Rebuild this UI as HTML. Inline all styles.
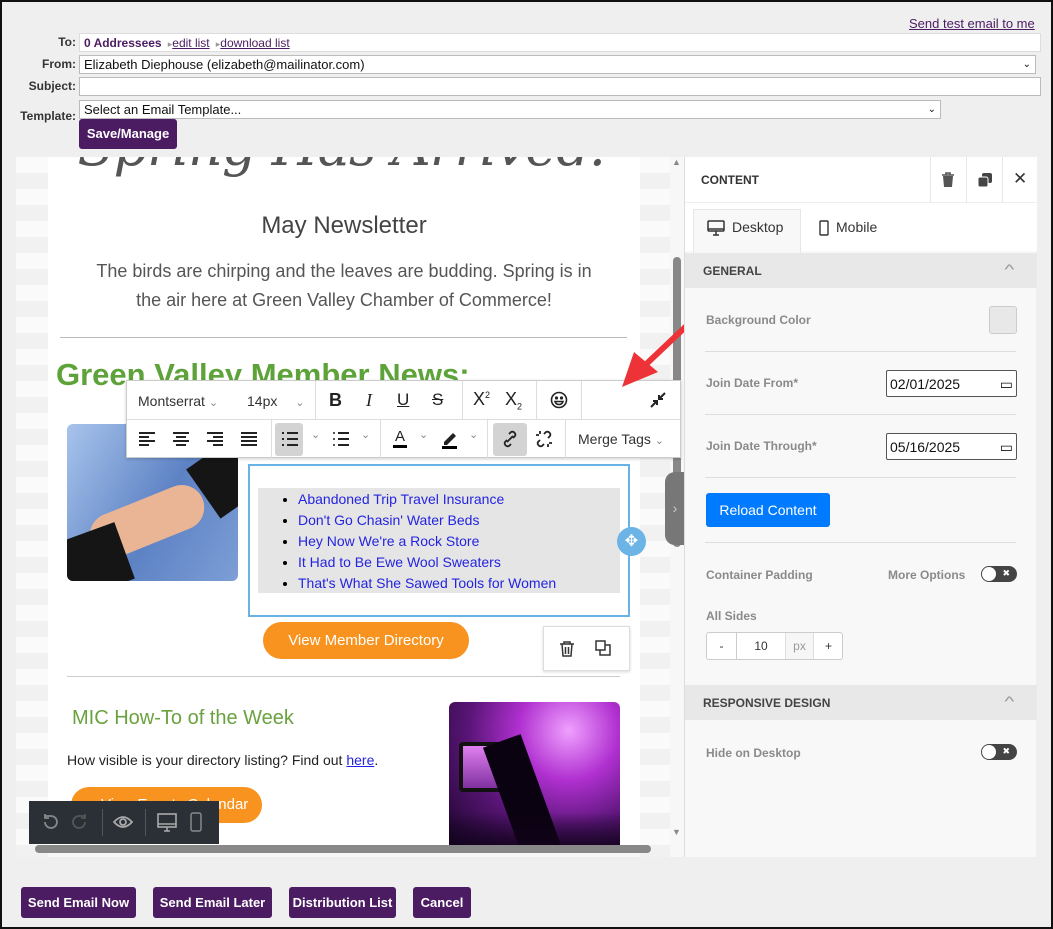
<!DOCTYPE html>
<html><head><meta charset="utf-8"><style>
*{box-sizing:border-box;margin:0;padding:0}
body{width:1053px;height:929px;background:#efefef;font-family:"Liberation Sans",sans-serif;position:relative;overflow:hidden}
.frame{position:absolute;left:0;top:0;width:1053px;height:929px;border:2px solid #111;pointer-events:none;z-index:50}
.a{position:absolute}
.lbl{position:absolute;font-size:12px;font-weight:bold;color:#333;text-align:right;width:74px}
.inp{position:absolute;background:#fff;border:1px solid #bbb;font-size:13px;padding:1px 4px;color:#111;height:19px;line-height:16px}
.pbtn{position:absolute;background:#4b1c62;color:#fff;font-size:13px;font-weight:bold;border-radius:3px;height:31px;line-height:31px;text-align:center}
.tb{position:absolute;background:#fff;border:1px solid #ccc;box-shadow:0 1px 3px rgba(0,0,0,.2)}
.rp{color:#8a8a8a;font-size:12px;font-weight:bold}
.sep{position:absolute;height:1px;background:#ddd;left:705px;width:311px}
.tog{position:absolute;width:36px;height:16px;border-radius:8px;background:#444}
.tog:before{content:"";position:absolute;left:1px;top:1px;width:14px;height:14px;border-radius:7px;background:#fff}
.tog:after{content:"✖";position:absolute;right:7px;top:2px;color:#fff;font-size:9px}
</style></head><body>
<div class="frame"></div>
<div class="a" style="left:909px;top:16px;font-size:13px;color:#4b1c62;text-decoration:underline">Send test email to me</div>
<div class="lbl" style="left:2px;top:35px">To:</div>
<div class="inp" style="left:79px;top:33px;width:962px;border-color:#ddd"><b style="color:#4b1c62;font-size:12px">0 Addressees</b> <span style="color:#999;font-size:9px">&nbsp;▸</span><span style="color:#4b1c62;text-decoration:underline;font-size:12px">edit list</span> <span style="color:#999;font-size:9px">&nbsp;▸</span><span style="color:#4b1c62;text-decoration:underline;font-size:12px">download list</span></div>
<div class="lbl" style="left:2px;top:57px">From:</div>
<div class="inp" style="left:79px;top:55px;width:957px">Elizabeth Diephouse (elizabeth@mailinator.com)<span style="float:right;font-size:10px">⌄</span></div>
<div class="lbl" style="left:2px;top:79px">Subject:</div>
<div class="inp" style="left:79px;top:77px;width:962px"></div>
<div class="lbl" style="left:2px;top:109px">Template:</div>
<div class="inp" style="left:79px;top:100px;width:862px">Select an Email Template...<span style="float:right;font-size:10px">⌄</span></div>
<div class="pbtn" style="left:79px;top:119px;width:98px;height:30px;line-height:30px">Save/Manage</div>

<div class="a" style="left:16px;top:157px;width:668px;height:700px;background:#f7f7f7;overflow:hidden">
 <div class="a" style="left:0;top:0;width:32px;height:700px;background:repeating-linear-gradient(#fafafa 0 16px,#f1f1f1 16px 32px)"></div>
 <div class="a" style="left:32px;top:0;width:592px;height:688px;background:#fff;overflow:hidden">
  <div class="a" style="left:0;width:592px;text-align:center;top:-42px;font-family:'DejaVu Serif',serif;font-style:italic;font-size:54px;color:#555;white-space:nowrap;letter-spacing:-1px">Spring Has Arrived!</div>
  <div class="a" style="left:0;width:592px;top:55px;text-align:center;font-size:24px;color:#444">May Newsletter</div>
  <div class="a" style="left:36px;width:520px;top:100px;text-align:center;font-size:18px;line-height:29px;color:#555">The birds are chirping and the leaves are budding. Spring is in the air here at Green Valley Chamber of Commerce!</div>
  <div class="a" style="left:12px;top:180px;width:567px;height:1px;background:#bbb"></div>
  <div class="a" style="left:8px;top:200px;font-size:31px;font-weight:bold;color:#5ea33a;white-space:nowrap">Green Valley Member News:</div>
  <div class="a" style="left:19px;top:267px;width:171px;height:157px;border-radius:6px;overflow:hidden;background:linear-gradient(120deg,#a8c4ec,#5d82c4 55%,#7d9ed6)">
   <div class="a" style="left:20px;top:75px;width:120px;height:45px;background:#e9b594;border-radius:25px;transform:rotate(-22deg)"></div>
   <div class="a" style="left:-20px;top:110px;width:80px;height:60px;background:#151515;transform:rotate(-20deg)"></div>
   <div class="a" style="left:130px;top:20px;width:70px;height:60px;background:#151515;transform:rotate(-35deg)"></div>
  </div>
  <div class="a" style="left:200px;top:307px;width:382px;height:153px;border:2px solid #69b2e6"></div>
  <div class="a" style="left:210px;top:331px;width:362px;height:105px;background:#e5e5e5;padding:1px 0 0 40px;font-size:14px;line-height:21px">
   <ul style="list-style:disc;color:#000"><li><span style="color:#2424e0">Abandoned Trip Travel Insurance</span></li><li><span style="color:#2424e0">Don't Go Chasin' Water Beds</span></li><li><span style="color:#2424e0">Hey Now We're a Rock Store</span></li><li><span style="color:#2424e0">It Had to Be Ewe Wool Sweaters</span></li><li><span style="color:#2424e0">That's What She Sawed Tools for Women</span></li></ul>
  </div>
  <div class="a" style="left:215px;top:465px;width:206px;height:37px;border-radius:19px;background:#f7931e;color:#fff;text-align:center;line-height:37px;font-size:15px">View Member Directory</div>
  <div class="a" style="left:495px;top:469px;width:87px;height:45px;background:#fff;border:1px solid #ddd;box-shadow:0 1px 3px rgba(0,0,0,.15)">
   <svg class="a" style="left:14px;top:13px" width="18" height="18" viewBox="0 0 18 18" fill="none" stroke="#333" stroke-width="1.5"><path d="M2 4h14M6 4V2h6v2M4 4l1 12h8l1-12M7.5 7v7M10.5 7v7"/></svg>
   <svg class="a" style="left:50px;top:12px" width="18" height="18" viewBox="0 0 18 18" fill="none" stroke="#333" stroke-width="1.5"><rect x="2" y="2" width="9" height="9"/><path d="M11 6h5v10H6v-5"/></svg>
  </div>
  <div class="a" style="left:19px;top:519px;width:553px;height:1px;background:#ccc"></div>
  <div class="a" style="left:24px;top:550px;font-size:20px;color:#6aa23f">MIC How-To of the Week</div>
  <div class="a" style="left:19px;top:595px;font-size:14px;color:#222">How visible is your directory listing? Find out <span style="color:#2424e0;text-decoration:underline">here</span>.</div>
  <div class="a" style="left:23px;top:630px;width:191px;height:36px;border-radius:18px;background:#f7931e;color:#fff;line-height:36px;font-size:15px;padding-left:30px">View Events Calendar</div>
  <div class="a" style="left:401px;top:545px;width:171px;height:143px;border-radius:6px 6px 0 0;overflow:hidden;background:radial-gradient(circle at 70% 20%,#f0a0ff,#b030d0 30%,#5a1578 60%,#1a0528)">
   <div class="a" style="left:10px;top:40px;width:60px;height:50px;background:linear-gradient(#e080f0,#8030a0);border:4px solid #111;border-radius:4px"></div>
   <div class="a" style="left:55px;top:35px;width:40px;height:130px;background:#0a0210;transform:rotate(-20deg)"></div>
   <div class="a" style="left:0;top:110px;width:171px;height:40px;background:linear-gradient(transparent,#12031c)"></div>
  </div>
 </div>
 <div class="a" style="left:624px;top:0;width:30px;height:700px;background:repeating-linear-gradient(#fafafa 0 16px,#f1f1f1 16px 32px)"></div>
 <div class="a" style="left:601px;top:370px;width:29px;height:29px;border-radius:15px;background:#6cb3e6;color:#fff;text-align:center;line-height:29px;font-size:16px">✥</div>
 <div class="a" style="left:657px;top:100px;width:8px;height:290px;background:#888;border-radius:4px"></div>
 <div class="a" style="left:656px;top:0;font-size:9px;color:#888">▲</div>
 <div class="a" style="left:656px;top:670px;font-size:9px;color:#888">▼</div>
 <div class="a" style="left:649px;top:315px;width:20px;height:73px;background:#777;border-radius:10px 0 0 10px;color:#ccc;font-size:14px;line-height:73px;text-align:center">›</div>
 <div class="a" style="left:19px;top:688px;width:616px;height:8px;background:#888;border-radius:4px"></div>
</div>

<div class="tb" style="left:126px;top:380px;width:555px;height:78px">
 <div class="a" style="left:0;top:38px;width:553px;height:1px;background:#ddd"></div>
 <div class="a" style="left:11px;top:12px;font-size:14px;color:#333">Montserrat <span style="color:#888;font-size:11px">⌄</span></div>
 <div class="a" style="left:120px;top:12px;font-size:14px;color:#333">14px <span style="color:#888;font-size:11px;margin-left:14px">⌄</span></div>
 <div class="a" style="left:188px;top:0;width:1px;height:38px;background:#ddd"></div>
 <div class="a" style="left:202px;top:9px;font-size:18px;font-weight:bold;color:#222">B</div>
 <div class="a" style="left:239px;top:9px;font-size:18px;font-style:italic;font-family:'Liberation Serif',serif;color:#222">I</div>
 <div class="a" style="left:270px;top:9px;font-size:17px;text-decoration:underline;color:#222">U</div>
 <div class="a" style="left:305px;top:9px;font-size:17px;text-decoration:line-through;color:#222">S</div>
 <div class="a" style="left:335px;top:0;width:1px;height:38px;background:#ddd"></div>
 <div class="a" style="left:346px;top:8px;font-size:18px;color:#222">X<sup style="font-size:9px">2</sup></div>
 <div class="a" style="left:378px;top:8px;font-size:18px;color:#222">X<sub style="font-size:9px">2</sub></div>
 <div class="a" style="left:409px;top:0;width:1px;height:38px;background:#ddd"></div>
 <svg class="a" style="left:423px;top:10px" width="18" height="18" viewBox="0 0 18 18" fill="none" stroke="#222" stroke-width="1.6"><circle cx="9" cy="9" r="7.5"/><circle cx="6.5" cy="7" r=".8" fill="#222"/><circle cx="11.5" cy="7" r=".8" fill="#222"/><path d="M5 10.5h8q-1 3-4 3t-4-3z"/></svg>
 <div class="a" style="left:454px;top:0;width:1px;height:38px;background:#ddd"></div>
 <svg class="a" style="left:523px;top:11px" width="16" height="16" viewBox="0 0 16 16" stroke="#222" stroke-width="2" fill="none"><path d="M15 1L9 7M9 3v4h4M1 15l6-6M3 9h4v4"/></svg>
 <svg class="a" style="left:12px;top:51px" width="16" height="14" viewBox="0 0 16 14" stroke="#222" stroke-width="2"><path d="M0 1h16M0 5h10M0 9h16M0 13h10"/></svg>
 <svg class="a" style="left:46px;top:51px" width="16" height="14" viewBox="0 0 16 14" stroke="#222" stroke-width="2"><path d="M0 1h16M3 5h10M0 9h16M3 13h10"/></svg>
 <svg class="a" style="left:80px;top:51px" width="16" height="14" viewBox="0 0 16 14" stroke="#222" stroke-width="2"><path d="M0 1h16M6 5h10M0 9h16M6 13h10"/></svg>
 <svg class="a" style="left:114px;top:51px" width="16" height="14" viewBox="0 0 16 14" stroke="#222" stroke-width="2"><path d="M0 1h16M0 5h16M0 9h16M0 13h16"/></svg>
 <div class="a" style="left:144px;top:39px;width:1px;height:38px;background:#ddd"></div>
 <div class="a" style="left:148px;top:42px;width:28px;height:33px;background:#d3d3d3;border-radius:3px"></div>
 <svg class="a" style="left:155px;top:51px" width="16" height="14" viewBox="0 0 16 14" stroke="#222" stroke-width="2"><path d="M0 1h2M0 7h2M0 13h2M5 1h11M5 7h11M5 13h11"/></svg>
 <div class="a" style="left:184px;top:47px;font-size:11px;color:#888">⌄</div>
 <svg class="a" style="left:206px;top:51px" width="16" height="14" viewBox="0 0 16 14" stroke="#222" stroke-width="2"><path d="M5 1h11M5 7h11M5 13h11"/><path d="M0 1h2M0 7h2M0 13h2" stroke-width="1.5"/></svg>
 <div class="a" style="left:234px;top:47px;font-size:11px;color:#888">⌄</div>
 <div class="a" style="left:253px;top:39px;width:1px;height:38px;background:#ddd"></div>
 <div class="a" style="left:266px;top:48px;font-size:15px;color:#222;border-bottom:3px solid #000;line-height:16px;padding:0 2px">A</div>
 <div class="a" style="left:292px;top:47px;font-size:11px;color:#888">⌄</div>
 <svg class="a" style="left:313px;top:48px" width="20" height="20" viewBox="0 0 20 20"><path d="M4 13l9-9 3 3-9 9H4z" fill="#222"/><rect x="2" y="17" width="15" height="3" fill="#000"/></svg>
 <div class="a" style="left:342px;top:47px;font-size:11px;color:#888">⌄</div>
 <div class="a" style="left:360px;top:39px;width:1px;height:38px;background:#ddd"></div>
 <div class="a" style="left:366px;top:42px;width:34px;height:33px;background:#d3d3d3;border-radius:3px"></div>
 <svg class="a" style="left:374px;top:49px" width="18" height="18" viewBox="0 0 18 18" fill="none" stroke="#222" stroke-width="1.8"><path d="M8 4l2-2a3 3 0 014 4l-2 2M10 14l-2 2a3 3 0 01-4-4l2-2M6 12l6-6"/></svg>
 <svg class="a" style="left:408px;top:49px" width="18" height="18" viewBox="0 0 18 18" fill="none" stroke="#222" stroke-width="1.8"><path d="M9 4l2-2a3 3 0 014 4l-2 2M9 14l-2 2a3 3 0 01-4-4l2-2M1 5h3M5 1v3M17 13h-3M13 17v-3"/></svg>
 <div class="a" style="left:438px;top:39px;width:1px;height:38px;background:#ddd"></div>
 <div class="a" style="left:451px;top:50px;font-size:14px;color:#333">Merge Tags <span style="color:#888;font-size:11px">⌄</span></div>
</div>

<svg class="a" style="left:600px;top:280px" width="130" height="120"><line x1="117" y1="17" x2="40" y2="90" stroke="#ee3338" stroke-width="6" stroke-linecap="round"/><path d="M22 107L34 72L58 92Z" fill="#ee3338"/></svg>

<div class="a" style="left:29px;top:801px;width:190px;height:43px;background:#2b2f36">
 <svg class="a" style="left:12px;top:12px" width="18" height="18" viewBox="0 0 18 18" fill="none" stroke="#888" stroke-width="1.8"><path d="M4 9a6 6 0 106-6H4M4 1v4h4" /></svg>
 <svg class="a" style="left:42px;top:12px" width="18" height="18" viewBox="0 0 18 18" fill="none" stroke="#555" stroke-width="1.8"><path d="M14 9a6 6 0 11-6-6h6M14 1v4h-4"/></svg>
 <div class="a" style="left:73px;top:8px;width:1px;height:27px;background:#555"></div>
 <svg class="a" style="left:84px;top:12px" width="20" height="18" viewBox="0 0 20 18" fill="none" stroke="#aaa" stroke-width="1.8"><path d="M1 9q9-10 18 0q-9 10-18 0z"/><circle cx="10" cy="9" r="3"/></svg>
 <div class="a" style="left:116px;top:8px;width:1px;height:27px;background:#555"></div>
 <svg class="a" style="left:128px;top:12px" width="20" height="20" viewBox="0 0 20 20" fill="none" stroke="#aaa" stroke-width="1.6"><rect x="1" y="1" width="18" height="13"/><path d="M1 11h18M7 18h6M10 14v4"/></svg>
 <svg class="a" style="left:161px;top:11px" width="12" height="20" viewBox="0 0 12 20" fill="none" stroke="#888" stroke-width="1.5"><rect x="1" y="1" width="10" height="18" rx="2"/></svg>
</div>

<div class="a" style="left:684px;top:157px;width:352px;height:700px;background:#f8f8f8;border-left:1px solid #ddd">
 <div class="a" style="left:0;top:0;width:352px;height:46px;background:#fff;border-bottom:1px solid #eee"></div>
 <div class="a" style="left:16px;top:16px;font-size:12px;font-weight:bold;color:#333">CONTENT</div>
 <div class="a" style="left:245px;top:0;width:1px;height:46px;background:#e6e6e6"></div>
 <div class="a" style="left:281px;top:0;width:1px;height:46px;background:#e6e6e6"></div>
 <div class="a" style="left:317px;top:0;width:1px;height:46px;background:#e6e6e6"></div>
 <svg class="a" style="left:256px;top:15px" width="14" height="16" viewBox="0 0 14 16"><path d="M1 3h12M5 3V1h4v2" stroke="#555" stroke-width="1.6" fill="none"/><path d="M2 4h10l-1 11H3z" fill="#555"/></svg>
 <svg class="a" style="left:292px;top:15px" width="16" height="16" viewBox="0 0 16 16"><rect x="5" y="1" width="10" height="10" rx="2" fill="#444"/><rect x="1" y="5" width="10" height="10" rx="2" fill="#444" stroke="#fff"/></svg>
 <div class="a" style="left:328px;top:12px;font-size:17px;color:#333">✕</div>
 <div class="a" style="left:0;top:46px;width:352px;height:48px;background:#fff"></div>
 <div class="a" style="left:8px;top:52px;width:108px;height:44px;background:#f8f8f8;border:1px solid #e6e6e6;border-bottom:none"></div>
 <svg class="a" style="left:22px;top:63px" width="18" height="16" viewBox="0 0 18 16" fill="none" stroke="#333" stroke-width="1.5"><rect x="1" y="1" width="16" height="10" rx="1"/><path d="M1 9h16M6 15h6M9 11v4"/></svg>
 <div class="a" style="left:47px;top:62px;font-size:14px;color:#333">Desktop</div>
 <svg class="a" style="left:134px;top:63px" width="10" height="16" viewBox="0 0 10 16" fill="none" stroke="#333" stroke-width="1.4"><rect x="1" y="1" width="8" height="14" rx="1"/></svg>
 <div class="a" style="left:151px;top:62px;font-size:14px;color:#333">Mobile</div>
 <div class="a" style="left:0;top:96px;width:352px;height:35px;background:#e8e8e8"></div>
 <div class="a" style="left:18px;top:107px;font-size:12px;font-weight:bold;color:#444">GENERAL</div>
 <div class="a" style="left:321px;top:104px;font-size:14px;color:#999;transform:scaleX(1.5)">^</div>
 <div class="a rp" style="left:21px;top:156px">Background Color</div>
 <div class="a" style="left:304px;top:149px;width:28px;height:28px;background:#e8e8e8;border:1px solid #ccc;border-radius:3px"></div>
 <div class="a rp" style="left:21px;top:219px">Join Date From*</div>
 <div class="a rp" style="left:21px;top:282px">Join Date Through*</div>
 <div class="a" style="left:201px;top:213px;width:131px;height:27px;background:#fff;border:1px solid #555;border-radius:2px;font-size:14px;padding:5px 3px;color:#111">02/01/2025<span style="float:right">▭</span></div>
 <div class="a" style="left:201px;top:276px;width:131px;height:27px;background:#fff;border:1px solid #555;border-radius:2px;font-size:14px;padding:5px 3px;color:#111">05/16/2025<span style="float:right">▭</span></div>
 <div class="a" style="left:21px;top:336px;width:124px;height:34px;background:#007bff;border-radius:3px;color:#fff;font-size:14px;line-height:34px;text-align:center">Reload Content</div>
 <div class="a rp" style="left:21px;top:411px">Container Padding</div>
 <div class="a rp" style="left:203px;top:411px">More Options</div>
 <div class="tog" style="left:296px;top:409px"></div>
 <div class="a rp" style="left:21px;top:452px">All Sides</div>
 <div class="a" style="left:21px;top:475px;width:137px;height:28px;background:#fff;border:1px solid #ccc;border-radius:3px;font-size:12px;color:#333">
  <span class="a" style="left:0;width:29px;text-align:center;top:6px">-</span>
  <span class="a" style="left:29px;top:0;width:1px;height:26px;background:#ccc"></span>
  <span class="a" style="left:30px;width:48px;text-align:center;top:6px">10</span>
  <span class="a" style="left:78px;top:0;width:29px;height:26px;background:#f6f6f6;border-left:1px solid #ddd;border-right:1px solid #ddd;text-align:center;line-height:26px;color:#999">px</span>
  <span class="a" style="left:107px;width:29px;text-align:center;top:6px">+</span>
 </div>
 <div class="a" style="left:0;top:528px;width:352px;height:35px;background:#e8e8e8"></div>
 <div class="a" style="left:18px;top:539px;font-size:12px;font-weight:bold;color:#444">RESPONSIVE DESIGN</div>
 <div class="a" style="left:321px;top:536px;font-size:14px;color:#999;transform:scaleX(1.5)">^</div>
 <div class="a rp" style="left:21px;top:589px">Hide on Desktop</div>
 <div class="tog" style="left:296px;top:587px"></div>
</div>
<div class="sep" style="top:351px"></div>
<div class="sep" style="top:414px"></div>
<div class="sep" style="top:477px"></div>
<div class="sep" style="top:542px"></div>

<div class="pbtn" style="left:21px;top:887px;width:115px">Send Email Now</div>
<div class="pbtn" style="left:153px;top:887px;width:119px">Send Email Later</div>
<div class="pbtn" style="left:289px;top:887px;width:107px">Distribution List</div>
<div class="pbtn" style="left:413px;top:887px;width:58px">Cancel</div>
</body></html>
